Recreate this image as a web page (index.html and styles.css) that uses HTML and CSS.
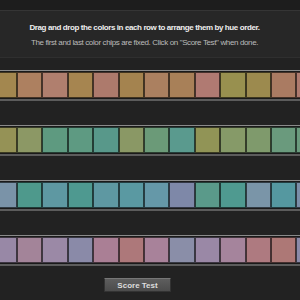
FILE: index.html
```html
<!DOCTYPE html>
<html lang="en">
<head>
  <meta charset="UTF-8">
  <meta name="viewport" content="width=device-width, initial-scale=1.0">
  <title>Hue Test</title>
  <link rel="stylesheet" href="styles.css">
</head>
<body>
  <div class="topbar"></div>
  <div class="intro">
    <p class="lead">Drag and drop the colors in each row to arrange them by hue order.</p>
    <p class="note">The first and last color chips are fixed. Click on "Score Test" when done.</p>
  </div>

  <div class="rows">
    <div class="row">
      <span class="chip" style="background:#a3874f"></span>
      <span class="chip" style="background:#ad8060"></span>
      <span class="chip" style="background:#b07f6e"></span>
      <span class="chip" style="background:#a68550"></span>
      <span class="chip" style="background:#ad7a6c"></span>
      <span class="chip" style="background:#a4834f"></span>
      <span class="chip" style="background:#ab8060"></span>
      <span class="chip" style="background:#a88058"></span>
      <span class="chip" style="background:#b07a72"></span>
      <span class="chip" style="background:#98904f"></span>
      <span class="chip" style="background:#9c8a4e"></span>
      <span class="chip" style="background:#aa7b62"></span>
      <span class="chip" style="background:#ae7a6e"></span>
    </div>
    <div class="row">
      <span class="chip" style="background:#959256"></span>
      <span class="chip" style="background:#8c9865"></span>
      <span class="chip" style="background:#5e9a80"></span>
      <span class="chip" style="background:#5e9a82"></span>
      <span class="chip" style="background:#58988a"></span>
      <span class="chip" style="background:#8a9865"></span>
      <span class="chip" style="background:#6b9a78"></span>
      <span class="chip" style="background:#5a9a8e"></span>
      <span class="chip" style="background:#919456"></span>
      <span class="chip" style="background:#869a68"></span>
      <span class="chip" style="background:#7f9a6c"></span>
      <span class="chip" style="background:#6a9a7d"></span>
      <span class="chip" style="background:#6a9a7d"></span>
    </div>
    <div class="row">
      <span class="chip" style="background:#7a93a8"></span>
      <span class="chip" style="background:#4e998c"></span>
      <span class="chip" style="background:#5e98a2"></span>
      <span class="chip" style="background:#4e9990"></span>
      <span class="chip" style="background:#5e98a2"></span>
      <span class="chip" style="background:#5a99a2"></span>
      <span class="chip" style="background:#6598a8"></span>
      <span class="chip" style="background:#7e88a8"></span>
      <span class="chip" style="background:#5a9a8a"></span>
      <span class="chip" style="background:#4f9a90"></span>
      <span class="chip" style="background:#7a95a8"></span>
      <span class="chip" style="background:#5598a0"></span>
      <span class="chip" style="background:#7a8ea8"></span>
    </div>
    <div class="row">
      <span class="chip" style="background:#9888a6"></span>
      <span class="chip" style="background:#a38499"></span>
      <span class="chip" style="background:#9b89a6"></span>
      <span class="chip" style="background:#8a8aa8"></span>
      <span class="chip" style="background:#aa7f95"></span>
      <span class="chip" style="background:#ad787a"></span>
      <span class="chip" style="background:#a8829a"></span>
      <span class="chip" style="background:#8a8ea8"></span>
      <span class="chip" style="background:#9a88a6"></span>
      <span class="chip" style="background:#a5849c"></span>
      <span class="chip" style="background:#ae7a80"></span>
      <span class="chip" style="background:#ad7876"></span>
      <span class="chip" style="background:#8a8aa8"></span>
    </div>
  </div>

  <div class="actions">
    <button class="score">Score Test</button>
  </div>
</body>
</html>
```

FILE: styles.css
```css
body {
  margin: 0;
  background-color: #222;
  font-family: "Liberation Sans", Arial, sans-serif;
  overflow: hidden;
}

.topbar {
  height: 10px;
  background-color: #1d1d1d;
  border-bottom: 1px solid #353535;
}

.intro {
  background-color: #272727;
  height: 47px;
  border-bottom: 1px solid #2f2f2f;
  padding-right: 11px;
  text-align: center;
  box-sizing: border-box;
  padding-top: 9px;
}

.intro p {
  margin: 0;
  font-size: 8px;
  line-height: 15px;
}

.lead {
  color: #eee;
  font-weight: bold;
  letter-spacing: -0.4px;
}

.note {
  color: #bbb;
  letter-spacing: -0.37px;
}

/* Filas de fichas */
.rows {
  display: flex;
  flex-direction: column;
  gap: 24px;
  margin-top: 12px;
}

.row {
  display: flex;
  overflow: hidden;
  background-color: #1a1a1a;
  border-top: 1px solid #8a8a8a;
  border-bottom: 2px solid #5c5c5c;
  padding: 1px 0;
}

.chip {
  flex: none;
  width: 23.4px;
  height: 24px;
  border: 1px solid rgba(0, 0, 0, 0.6);
}

.chip:first-child {
  margin-left: -8.4px;
}

.actions {
  display: flex;
  margin-top: 12px;
  padding-left: 104px;
}

.score {
  width: 67px;
  height: 14px;
  padding: 0;
  font-family: "Liberation Sans", Arial, sans-serif;
  font-size: 8px;
  font-weight: bold;
  color: #ddd;
  background: linear-gradient(#5e5e5e, #4c4c4c);
  border: 1px solid #333;
  border-top-color: #777;
  border-radius: 1px;
}
```
